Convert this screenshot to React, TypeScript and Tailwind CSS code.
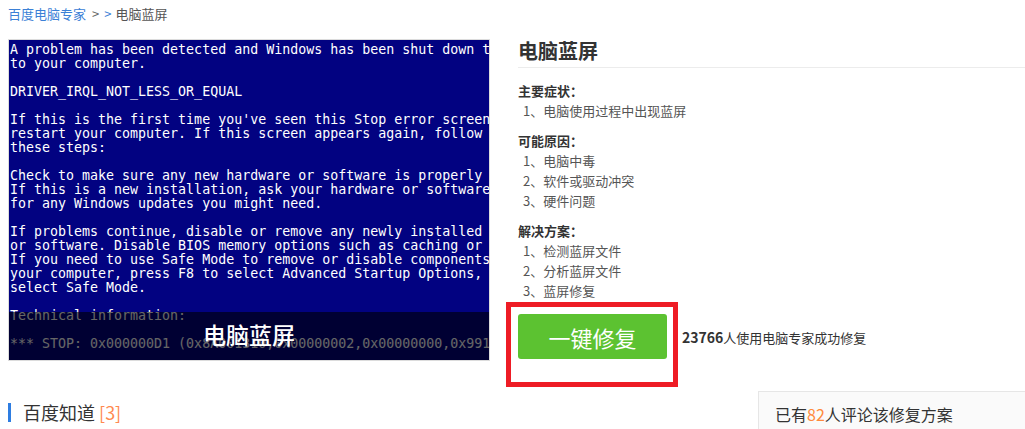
import React from "react";

const bsod: string[] = [
  "A problem has been detected and Windows has been shut down to prevent damage",
  "to your computer.",
  "",
  "DRIVER_IRQL_NOT_LESS_OR_EQUAL",
  "",
  "If this is the first time you've seen this Stop error screen,",
  "restart your computer. If this screen appears again, follow",
  "these steps:",
  "",
  "Check to make sure any new hardware or software is properly installed.",
  "If this is a new installation, ask your hardware or software manufacturer",
  "for any Windows updates you might need.",
  "",
  "If problems continue, disable or remove any newly installed hardware",
  "or software. Disable BIOS memory options such as caching or shadowing.",
  "If you need to use Safe Mode to remove or disable components, restart",
  "your computer, press F8 to select Advanced Startup Options, and then",
  "select Safe Mode.",
  "",
  "Technical information:",
  "",
  "*** STOP: 0x000000D1 (0x8A001310,0x00000002,0x00000000,0x99140000)",
];

const sections: { title: string; items: string[] }[] = [
  { title: "主要症状：", items: ["电脑使用过程中出现蓝屏"] },
  { title: "可能原因：", items: ["电脑中毒", "软件或驱动冲突", "硬件问题"] },
  { title: "解决方案：", items: ["检测蓝屏文件", "分析蓝屏文件", "蓝屏修复"] },
];

export default function App() {
  return (
    <div className="w-[1025px] h-[429px] overflow-hidden bg-white font-['Noto_Sans_CJK_SC','Noto_Sans',sans-serif] text-[#333]">
      {/* breadcrumb */}
      <div className="h-[39px] pl-[8px] pt-[5px] text-[13px] leading-[17px] flex items-start">
        <span className="text-[#3b80d6]">百度电脑专家</span>
        <span className="text-[#666] ml-[6px]">&gt;</span>
        <span className="text-[#3b80d6] ml-[5px]">&gt;</span>
        <span className="text-[#555] ml-[4px]">电脑蓝屏</span>
      </div>

      {/* main */}
      <div className="flex items-start h-[352px]">
        <div className="ml-[8px] w-[482px] h-[322px] border border-[#dcdcdc] shrink-0">
          <div className="relative w-[480px] h-[320px] bg-[#020281] overflow-hidden pt-[3px] pl-[1px]">
            {bsod.map((l, i) => (
              <div
                key={i}
                className="h-[14px] leading-[14px] whitespace-pre text-white text-[13.3px] font-['DejaVu_Sans_Mono',monospace]"
              >
                {l}
              </div>
            ))}
            <div className="absolute left-0 right-0 bottom-0 h-[48px] bg-black/60 flex items-center justify-center">
              <span className="text-white text-[23px] leading-[26px] font-medium font-['Noto_Sans_CJK_SC',sans-serif] mt-[-4px]">
                电脑蓝屏
              </span>
            </div>
          </div>
        </div>

        <div className="ml-[28px] flex-1 flex flex-col">
          <div className="text-[20px] font-bold leading-[24px] pb-[4px] border-b border-[#ececec] text-[#333]">
            电脑蓝屏
          </div>
          <div className="mt-[13px] flex flex-col gap-[10px]">
            {sections.map((s) => (
              <div key={s.title} className="text-[13px] leading-[20px]">
                <div className="font-bold text-[#333]">{s.title}</div>
                {s.items.map((it, i) => (
                  <div key={it} className="pl-[5px] text-[#555]">
                    {`${i + 1}、${it}`}
                  </div>
                ))}
              </div>
            ))}
          </div>
          <div className="flex items-start -ml-[12px] mt-[1px]">
            <div className="w-[172px] h-[85px] border-[5px] border-[#ee1c25] pl-[7px] pt-[7px] shrink-0">
              <div className="w-[149px] h-[45px] rounded-[3px] bg-[#5cc231] flex items-center justify-center text-white text-[22px] leading-[26px]">
                一键修复
              </div>
            </div>
            <div className="ml-[4px] mt-[25px] leading-[20px] text-[13px] text-[#333] whitespace-nowrap">
              <span className="font-bold text-[14px]">23766</span>
              <span>人使用电脑专家成功修复</span>
            </div>
          </div>
        </div>
      </div>

      {/* bottom */}
      <div className="flex items-start justify-between">
        <div className="ml-[8px] mt-[11px] flex items-center">
          <div className="w-[3px] h-[19px] bg-[#2e7de1]" />
          <div className="ml-[12px] text-[18px] leading-[20px] text-[#333]">
            百度知道 <span className="text-[#ff8a50]">[3]</span>
          </div>
        </div>
        <div className="w-[267px] h-[60px] border-t border-l border-[#e6e6e6] bg-[#fafafa] pl-[16px] pt-[12px] text-[16px] leading-[20px] text-[#333]">
          已有<span className="text-[#ff8a3d]">82</span>人评论该修复方案
        </div>
      </div>
    </div>
  );
}
